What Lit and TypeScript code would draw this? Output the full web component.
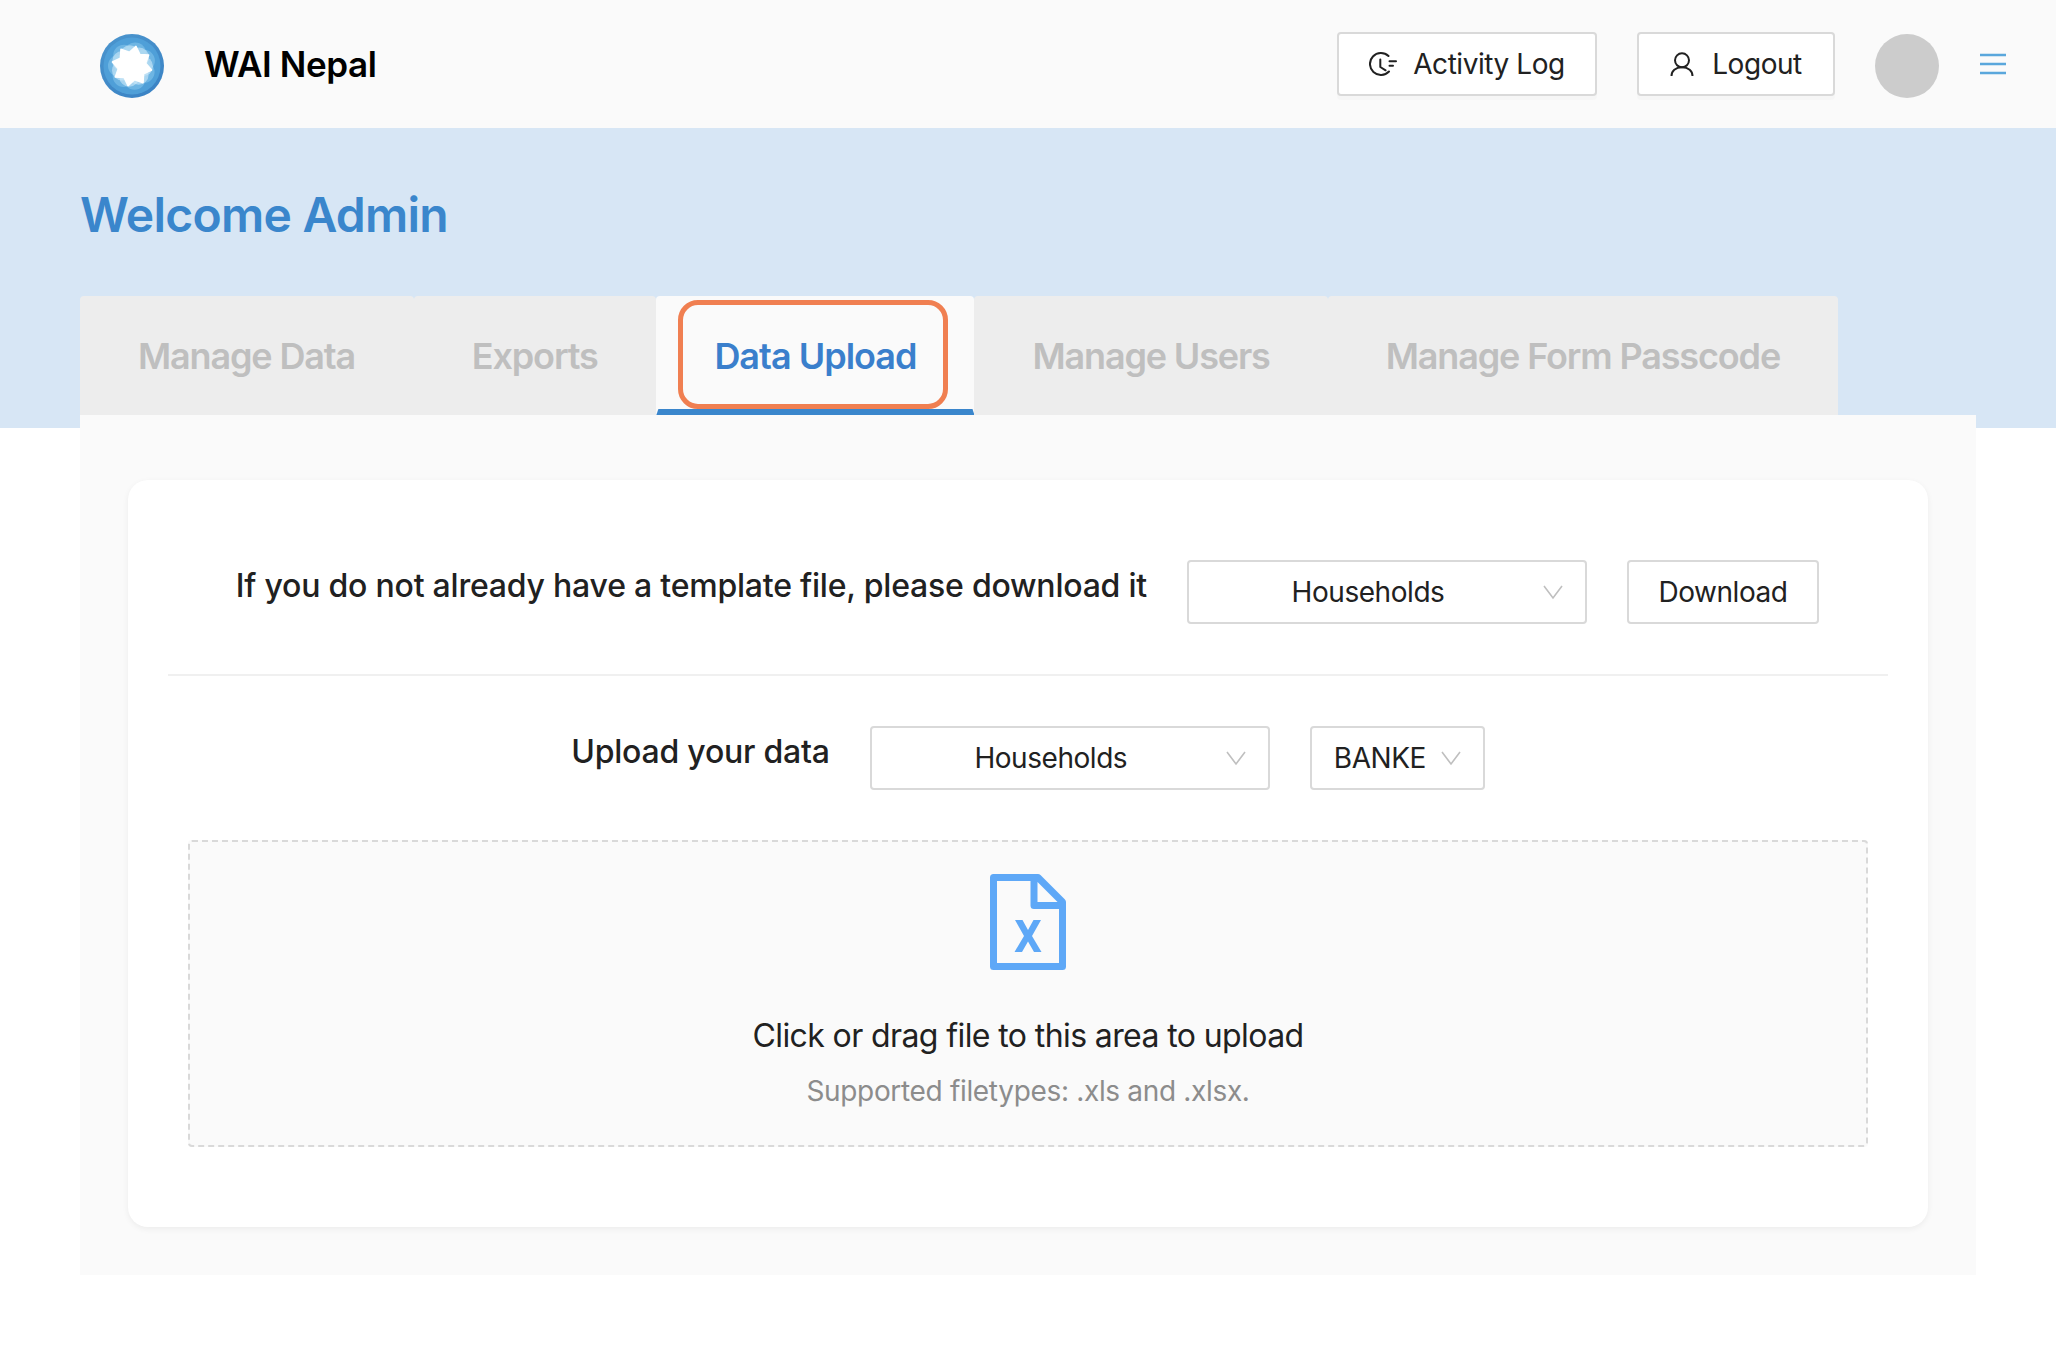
import {LitElement, html, css, svg} from 'lit';
import {customElement, state} from 'lit/decorators.js';

const TABS = ['Manage Data', 'Exports', 'Data Upload', 'Manage Users', 'Manage Form Passcode'];

const chevron = html`<svg class="chev" viewBox="0 0 20 20" fill="none" stroke="#bfbfbf" stroke-width="1.6"><path d="M1 4l9 12 9-12"/></svg>`;

const star = (r1: number, r2: number, n: number, rot: number) => {
  const pts: string[] = [];
  for (let i = 0; i < n * 2; i++) {
    const r = i % 2 ? r2 : r1;
    const a = (Math.PI * i) / n + rot;
    pts.push(`${(32 + r * Math.sin(a)).toFixed(2)},${(32 - r * Math.cos(a)).toFixed(2)}`);
  }
  return pts.join(' ');
};

// lobes that overlap round the white star of the logo
const lobes = (count: number, dist: number, r: number, rot: number, fill: string, op: number) =>
  Array.from({length: count}, (_, i) => {
    const a = (Math.PI * 2 * i) / count + rot;
    return svg`<circle cx=${32 + dist * Math.sin(a)} cy=${32 - dist * Math.cos(a)} r=${r} fill=${fill} opacity=${op} />`;
  });

@customElement('app-root')
export class AppRoot extends LitElement {
  @state() active = 'Data Upload';

  static styles = css`
    :host {
      display: block;
      min-height: 1358px;
      background: #fff;
      font-family: Inter, "Liberation Sans", sans-serif;
      color: #212121;
    }
    .header {
      height: 128px;
      background: #fafafa;
      display: flex;
      align-items: center;
      padding: 0 50px 0 100px;
      box-sizing: border-box;
    }
    .logo { width: 64px; height: 64px; margin-top: 4px; }
    .brand {
      margin-left: 40px;
      font-size: 35px;
      font-weight: 600;
      color: #000;
      letter-spacing: -0.4px;
      flex: 1;
    }
    .btn {
      height: 64px;
      box-sizing: border-box;
      border: 2px solid #d9d9d9;
      border-radius: 4px;
      background: #fff;
      box-shadow: 0 4px 0 rgba(0, 0, 0, 0.015);
      display: inline-flex;
      align-items: center;
      justify-content: center;
      font-size: 28px;
      letter-spacing: -0.45px;
      color: #212121;
    }
    .btn svg { height: 24px; margin-right: 16px; flex: none; }
    .btn .ico-log { width: 28px; }
    .btn .ico-user { width: 24px; margin-right: 18px; }
    .log { width: 260px; margin-right: 40px; }
    .logout { width: 198px; margin-right: 40px; }
    .avatar {
      width: 64px;
      height: 64px;
      margin-top: 4px;
      border-radius: 50%;
      background: #ccc;
      margin-right: 41px;
    }
    .burger { width: 26px; height: 22px; display: block; }
    .band {
      height: 300px;
      background: #d7e6f5;
      padding: 58px 0 0 80px;
      box-sizing: border-box;
    }
    h1 {
      margin: 0;
      font-size: 48px;
      line-height: 58px;
      font-weight: 600;
      color: #3a86cc;
      letter-spacing: -0.75px;
    }
    .panel {
      position: relative;
      margin: -132px 80px 0;
    }
    .tabs { display: flex; height: 119px; }
    .tab {
      position: relative;
      display: flex;
      align-items: center;
      padding: 0 58px;
      background: #ededed;
      font-size: 36px;
      font-weight: 600;
      color: #bfbfbf;
      letter-spacing: -1.15px;
      border-radius: 4px 4px 0 0;
      box-sizing: border-box;
      white-space: nowrap;
    }
    .tab:nth-child(-n + 2) { padding-right: 58.8px; }
    .tab.active {
      background: #fafafa;
      color: #3a7fcc;
      letter-spacing: -1px;
    }
    .tab.active::after {
      content: "";
      position: absolute;
      left: 0;
      right: 0;
      bottom: 0;
      height: 6px;
      background: #3a86cc;
      clip-path: polygon(2px 0, calc(100% - 2px) 0, 100% 100%, 0 100%);
    }
    .ring {
      position: absolute;
      left: 22px;
      right: 26px;
      top: 4px;
      bottom: 6px;
      border: 5px solid #f07f51;
      border-radius: 20px;
    }
    .content {
      background: #fafafa;
      padding: 65px 48px 48px;
    }
    .card {
      background: #fff;
      border-radius: 20px;
      height: 747px;
      box-sizing: border-box;
      box-shadow: 0 2px 6px rgba(0, 0, 0, 0.06);
      padding: 80px 40px 0;
    }
    .row {
      display: flex;
      align-items: center;
      justify-content: center;
    }
    .row.first {
      justify-content: flex-end;
      padding: 0 69px 50px 0;
      border-bottom: 2px solid #f0f0f0;
    }
    .row.second {
      margin-top: 50px;
    }
    .label {
      font-size: 32px;
      font-weight: 500;
      margin: -14px 40px 0 0;
      letter-spacing: -0.22px;
    }
    .select {
      height: 64px;
      box-sizing: border-box;
      border: 2px solid #d9d9d9;
      border-radius: 4px;
      display: flex;
      align-items: center;
      font-size: 28px;
      letter-spacing: -0.45px;
      background: #fff;
      margin-right: 40px;
      padding: 0 22px;
    }
    .select.wide { width: 400px; }
    .select.wide span { flex: 1; text-align: center; padding-right: 18px; }
    .select.small { width: 175px; padding-right: 22px; margin-right: 0; justify-content: space-between; }
    .chev { width: 20px; height: 20px; }
    .dl { width: 192px; box-shadow: none; }
    .drag {
      margin: 50px 20px 0;
      height: 307px;
      box-sizing: border-box;
      background: #fafafa;
      border: 2px dashed #d9d9d9;
      border-radius: 4px;
      display: flex;
      flex-direction: column;
      align-items: center;
      padding-top: 32px;
    }
    .file { width: 76px; height: 96px; display: block; }
    .drag-title { font-size: 32px; margin-top: 46px; line-height: 40px; letter-spacing: -0.6px; }
    .drag-hint { font-size: 28px; margin-top: 17px; line-height: 36px; color: #8c8c8c; letter-spacing: -0.33px; }
  `;

  renderLogo() {
    return html`<svg class="logo" viewBox="0 0 64 64">
      <defs>
        <linearGradient id="lg" x1="0.2" y1="0" x2="0.8" y2="1">
          <stop offset="0" stop-color="#4a94cd" />
          <stop offset="1" stop-color="#3a82c4" />
        </linearGradient>
        <clipPath id="lc"><circle cx="32" cy="32" r="28" /></clipPath>
      </defs>
      <circle cx="32" cy="32" r="32" fill="url(#lg)" />
      <circle cx="32" cy="32" r="28.500" fill="#4f9fd8" />
      <g clip-path="url(#lc)">
        ${lobes(7, 13, 11, 0.25, '#7fc2ea', 0.65)}
        ${lobes(7, 11, 10, 0.7, '#cfe9f8', 0.6)}
      </g>
      ${svg`<polygon points=${star(20, 14, 8, 0.2)} fill="#fff" stroke="#fff" stroke-width="1.5" stroke-linejoin="round" />`}
    </svg>`;
  }

  renderSelect(label: string, cls: string) {
    return html`<div class="select ${cls}"><span>${label}</span>${chevron}</div>`;
  }

  render() {
    return html`
      <div class="header">
        ${this.renderLogo()}
        <div class="brand">WAI Nepal</div>
        <div class="btn log">
          <svg class="ico-log" viewBox="0 0 28 24" fill="none" stroke="#212121" stroke-width="2" stroke-linecap="round" stroke-linejoin="round">
            <path d="M19.500 4A11 11 0 1 0 20 19.500" />
            <path d="M11.300 7.500V15l5.300 3.300" />
            <path d="M20.500 9.300H27M20.500 13.700H24" />
          </svg>
          Activity Log
        </div>
        <div class="btn logout">
          <svg class="ico-user" viewBox="0 0 24 24" fill="none" stroke="#212121" stroke-width="2" stroke-linecap="round">
            <circle cx="12" cy="8.300" r="7" />
            <path d="M1.500 24c0-5 4-8.700 10.500-8.700S22.500 19 22.500 24" />
          </svg>
          Logout
        </div>
        <div class="avatar"></div>
        <svg class="burger" viewBox="0 0 26 22" fill="none" stroke="#5aa7dc" stroke-width="2.4">
          <path d="M0 2h26M0 11h26M0 20h26" />
        </svg>
      </div>
      <div class="band"><h1>Welcome Admin</h1></div>
      <div class="panel">
        <div class="tabs">
          ${TABS.map(
            (t) => html`<div class="tab ${t === this.active ? 'active' : ''}">
              ${t}${t === this.active ? html`<div class="ring"></div>` : ''}
            </div>`
          )}
        </div>
        <div class="content">
          <div class="card">
            <div class="row first">
              <div class="label">If you do not already have a template file, please download it</div>
              ${this.renderSelect('Households', 'wide')}
              <div class="btn dl">Download</div>
            </div>
            <div class="row second">
              <div class="label">Upload your data</div>
              ${this.renderSelect('Households', 'wide')}
              ${this.renderSelect('BANKE', 'small')}
            </div>
            <div class="drag">
              <svg class="file" viewBox="0 0 76 96">
                <path fill="none" stroke="#5ea8f7" stroke-width="7" stroke-linejoin="round"
                  d="M3.500 3.500H48L72.500 28V92.500H3.500Z M44 3.500V31.500H72.500" />
                <path fill="#5ea8f7" d="M25 46h7.500L38 56l5.500-10H51L42 62l9.500 16h-7.500L38 67.500 32 78h-7.500L34 62z" />
              </svg>
              <div class="drag-title">Click or drag file to this area to upload</div>
              <div class="drag-hint">Supported filetypes: .xls and .xlsx.</div>
            </div>
          </div>
        </div>
      </div>
    `;
  }
}
